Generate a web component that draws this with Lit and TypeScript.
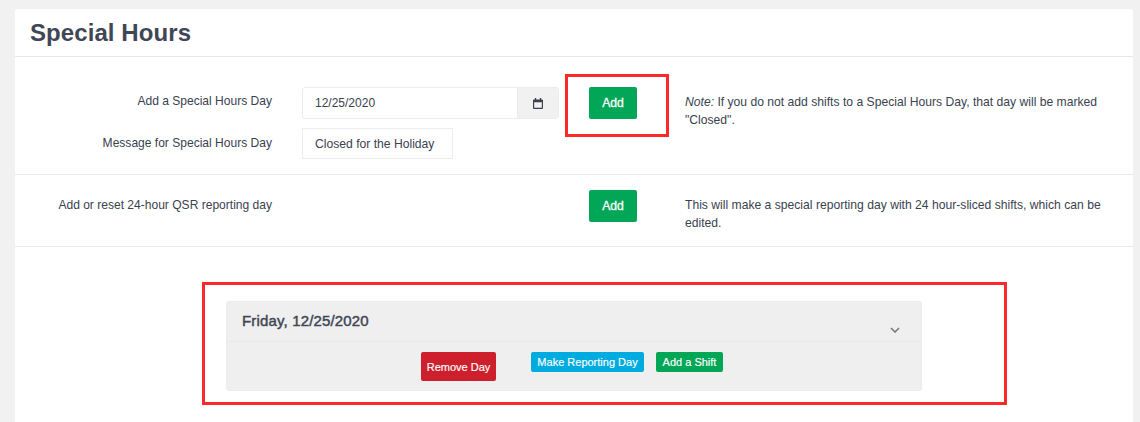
import { LitElement, html, css } from "lit";
import { customElement } from "lit/decorators.js";

@customElement("app-root")
export class AppRoot extends LitElement {
  static styles = css`
    :host {
      display: block;
      position: relative;
      height: 422px;
      overflow: hidden;
      background: #f1f1f1;
      font-family: "Liberation Sans", Arial, sans-serif;
      color: #3a4250;
      font-size: 12.15px;
    }
    .card {
      margin: 9px 7px 0 15px;
      height: 413px;
      background: #fff;
      border-radius: 3px 3px 0 0;
      box-sizing: border-box;
    }
    .title {
      height: 48px;
      box-sizing: border-box;
      padding: 9px 15px 0;
      border-bottom: 1px solid #e8e8e8;
    }
    h1 {
      margin: 0;
      font-size: 24px;
      line-height: 30px;
      font-weight: 700;
      letter-spacing: 0.08px;
      color: #3f4756;
    }
    .row {
      display: grid;
      grid-template-columns: 257px 257px 48px 1fr;
      column-gap: 30px;
      box-sizing: border-box;
      border-bottom: 1px solid #e8e8e8;
    }
    .row1 { height: 118px; padding-top: 30px; }
    .row2 { height: 72px; padding-top: 15px; }
    .row > .btn-cell { grid-column: 3; }
    .note-cell {
      grid-column: 4;
      margin-left: 18px;
      margin-right: 28px;
      line-height: 18.5px;
      padding-top: 5.5px;
    }
    .fields {
      grid-column: 1 / span 2;
      display: grid;
      grid-template-columns: 257px 257px;
      column-gap: 30px;
      row-gap: 9px;
      align-content: start;
    }
    label {
      text-align: right;
      line-height: 18px;
      padding-top: 6px;
      font-size: 12.05px;
    }
    .row1 label:first-child { padding-top: 5px; }
    .row2 label { grid-column: 1; }
    .group {
      display: flex;
      height: 32px;
      box-sizing: border-box;
      border: 1px solid #ececec;
      border-radius: 3px;
      background: #fff;
    }
    .value {
      flex: 1;
      padding-left: 12px;
      line-height: 30px;
      font-size: 12px;
    }
    .addon {
      width: 39px;
      padding-right: 1px;
      display: flex;
      align-items: center;
      justify-content: center;
      background: #f1f1f1;
      border-left: 1px solid #ececec;
    }
    .msg {
      width: 151px;
      height: 31px;
      box-sizing: border-box;
      border: 1px solid #ececec;
      padding-left: 12px;
      line-height: 30px;
      white-space: nowrap;
    }
    .btn {
      display: inline-flex;
      align-items: center;
      justify-content: center;
      box-sizing: border-box;
      color: #fff;
      border-radius: 2px;
      white-space: nowrap;
    }
    .green { background: #02a657; }
    .add {
      width: 48px;
      height: 32px;
      font-size: 12.15px;
      -webkit-text-stroke: 0.3px #fff;
    }
    .body {
      padding: 54px 211px 0 211px;
    }
    .panel {
      height: 90px;
      background: #efefef;
      border-radius: 3px;
      box-sizing: border-box;
      border: 1px solid #ececec;
    }
    .panel-head {
      height: 40px;
      box-sizing: border-box;
      border-bottom: 1px solid #e9e9e9;
      padding: 0 15px;
      display: flex;
      justify-content: space-between;
    }
    .panel-title {
      font-size: 15px;
      line-height: 38px;
      letter-spacing: 0.16px;
      -webkit-text-stroke: 0.45px #3f4754;
      color: #3f4754;
    }
    .chev { margin: 25px 6px 0 0; }
    .panel-foot {
      display: flex;
      align-items: flex-start;
      padding: 10px 0 0 194px;
    }
    .sm {
      font-size: 11px;
      height: 20px;
      -webkit-text-stroke: 0.15px #fff;
    }
    .red { background: #cd202c; width: 75px; height: 29px; margin-right: 35px; }
    .blue { background: #00acdf; width: 113px; margin-right: 12px; }
    .shift { width: 67px; }
    .mark {
      position: absolute;
      box-sizing: border-box;
      border: 3px solid #fb2a29;
      pointer-events: none;
    }
    .m1 { left: 565px; top: 74px; width: 104px; height: 63px; }
    .m2 { left: 202px; top: 282px; width: 805px; height: 123px; }
  `;

  render() {
    return html`
      <div class="card">
        <div class="title"><h1>Special Hours</h1></div>
        <div class="row row1">
          <div class="fields">
            <label>Add a Special Hours Day</label>
            <div class="group">
              <div class="value">12/25/2020</div>
              <div class="addon">
                <svg width="10" height="11" viewBox="0 0 11 12">
                  <path fill="#3a4250" d="M2 0h1.500v1.500h4V0H9v1.500h1a1 1 0 0 1 1 1V11a1 1 0 0 1-1 1H1a1 1 0 0 1-1-1V2.500a1 1 0 0 1 1-1h1zM1.300 4.500v6.200h8.400V4.500z"/>
                </svg>
              </div>
            </div>
            <label>Message for Special Hours Day</label>
            <div class="msg">Closed for the Holiday</div>
          </div>
          <div class="btn-cell"><div class="btn green add">Add</div></div>
          <div class="note-cell"><em>Note:</em> If you do not add shifts to a Special Hours Day, that day will be marked "Closed".</div>
        </div>
        <div class="row row2">
          <label>Add or reset 24-hour QSR reporting day</label>
          <div class="btn-cell"><div class="btn green add">Add</div></div>
          <div class="note-cell">This will make a special reporting day with 24 hour-sliced shifts, which can be edited.</div>
        </div>
        <div class="body">
          <div class="panel">
            <div class="panel-head">
              <div class="panel-title">Friday, 12/25/2020</div>
              <svg class="chev" width="10" height="6" viewBox="0 0 10 6">
                <path d="M1 1l4 4 4-4" fill="none" stroke="#6f7580" stroke-width="1.500"/>
              </svg>
            </div>
            <div class="panel-foot">
              <div class="btn sm red">Remove Day</div>
              <div class="btn sm blue">Make Reporting Day</div>
              <div class="btn sm green shift">Add a Shift</div>
            </div>
          </div>
        </div>
      </div>
      <div class="mark m1"></div>
      <div class="mark m2"></div>
    `;
  }
}
